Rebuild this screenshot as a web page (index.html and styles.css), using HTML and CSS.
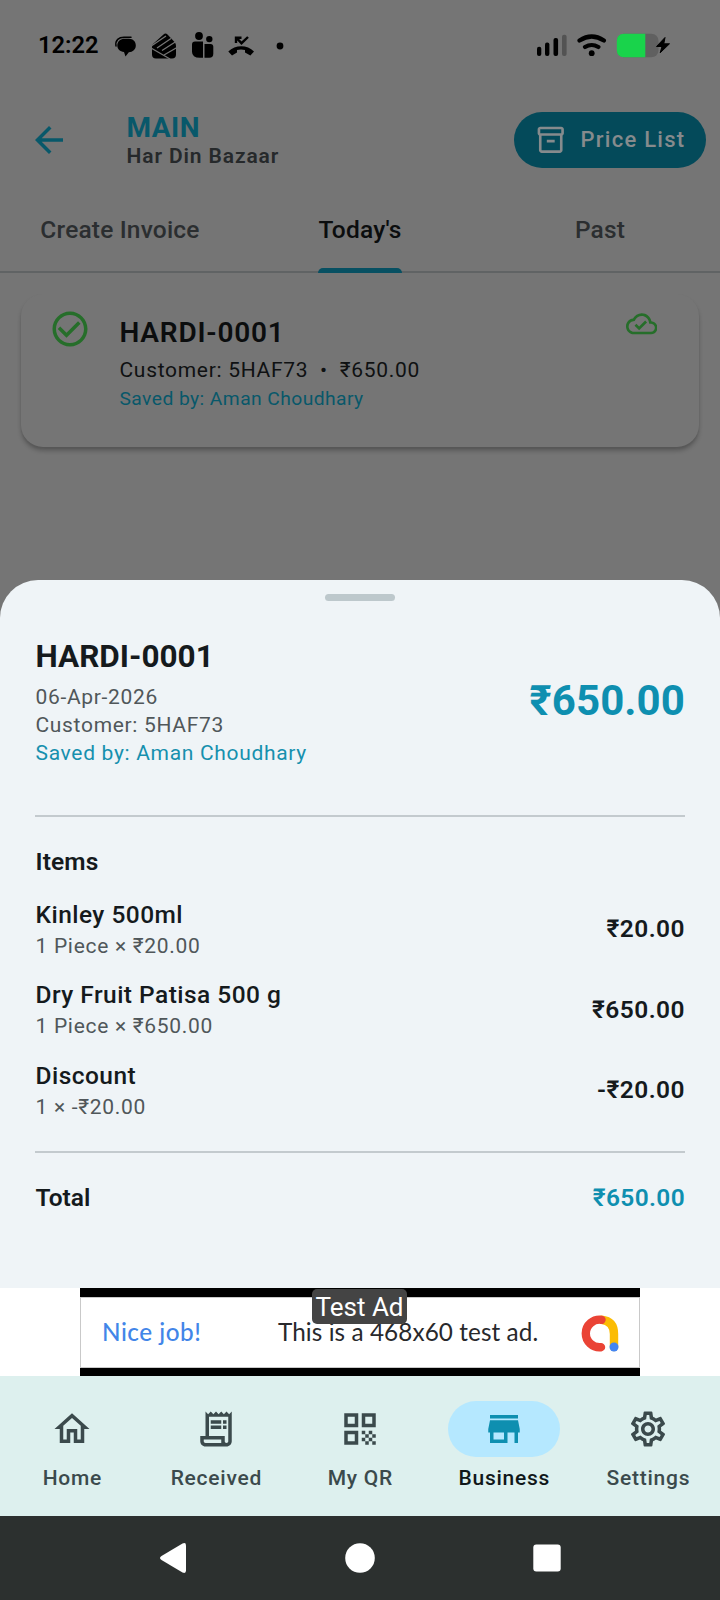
FILE: index.html
```html
<!DOCTYPE html>
<html lang="en">
<head>
<meta charset="utf-8">
<title>Invoice details</title>
<link rel="stylesheet" href="styles.css">
</head>
<body>
<div class="screen">
  <div class="backdrop">
    <div class="status">
      <span class="clock">12:22</span>
      <svg class="notif" width="250" height="30" viewBox="0 0 250 30">
        <path class="rim" d="M2 16C1 10 5 7.300 10 7.300h7"/>
        <path d="M11 8.800h4c4 0 6.800 2.800 6.800 6.600 0 4-3 6.400-7 6.800L11.500 26.500l-1.500-4.500C6 21.500 3.300 19 3.300 15.500c0-4 3.200-6.700 7.700-6.700z"/>
        <g transform="translate(38,1)"><path d="M1 13 11.500 3.500q2-2 4 0l7.500 8q1 1.500 1 3.500v8.500q0 4-4 4H4q-4 0-4-4V16q0-2 1-3z"/><g class="cut"><path d="M0 14.500 14 5M5 17 19 7.500M10 19.500 24 10.500M-1 17l19 11M25 16.500 12 24"/></g></g>
        <g transform="translate(77,1.500)"><circle cx="8" cy="4.500" r="3.900"/><circle cx="18.300" cy="7.600" r="3.200"/><path d="M4 10h8v16.300H9q-8 0-8-6v-7.300q0-3 3-3z"/><path d="M13.500 12.500h6q2.800 0 2.800 3v6.800q0 4-4 4h-4.800z"/></g>
        <path d="M114.300 21.500c7-7 19-7 25.700 0l-3.600 4-5.400-3v-2.500q-4-1.200-8 0V22.500l-5 3z"/>
        <path class="line" d="M122 13V7.800h5.500M122.500 8l5 5.200L134 7"/>
        <circle cx="166" cy="16" r="3.400"/>
      </svg>
      <svg class="system" width="136" height="30" viewBox="0 0 136 30">
        <rect x="2" y="16.800" width="4.300" height="9.200" rx="2"/><rect x="10" y="12.500" width="4.400" height="13.500" rx="2"/><rect x="18.500" y="8" width="4.600" height="18" rx="2"/><rect x="27" y="4.800" width="4.600" height="21.200" rx="2" fill="#535353"/>
        <path class="wave" d="M44.500 10.500q12.200-8 24.400 0M50 17q6.700-4 13.400 0"/><circle cx="56.700" cy="23.200" r="2.900"/>
        <rect x="82" y="3.700" width="41.500" height="23.500" rx="7" fill="#606060"/><path d="M89 3.700h21.300v23.500H89q-7.200 0-7.200-7.500v-8.500q0-7.500 7.200-7.500z" fill="#19d34b"/>
        <path class="bolt" d="m130 7.500-8.500 9h5.500l-1.800 6.300 9.300-9h-5.700z"/>
      </svg>
    </div>
    <header class="appbar">
      <svg class="back" width="42" height="42" viewBox="0 0 24 24"><path d="M20 11H7.830l5.590-5.590L12 4l-8 8 8 8 1.410-1.410L7.830 13H20v-2z"/></svg>
      <div class="heading">
        <div class="brand">MAIN</div>
        <div class="shop">Har Din Bazaar</div>
      </div>
      <div class="price-button">
        <svg width="31.500" height="31.500" viewBox="0 0 24 24"><path d="M20 2H4c-1 0-2 .9-2 2v3.010c0 .72.430 1.340 1 1.690V20c0 1.100 1.100 2 2 2h14c.9 0 2-.9 2-2V8.700c.570-.350 1-.970 1-1.690V4c0-1.100-1-2-2-2zm-1 18H5V9h14v11zm1-13H4V4h16v3zM9 12h6v2H9z"/></svg>
        <span>Price List</span>
      </div>
    </header>
    <div class="tabs">
      <div class="tab"><span>Create Invoice</span></div>
      <div class="tab active"><span>Today's</span></div>
      <div class="tab"><span>Past</span></div>
    </div>
    <div class="list">
      <div class="card">
        <svg class="check" width="42" height="42" viewBox="0 0 24 24"><path d="M16.590 7.580L10 14.170l-3.590-3.580L5 12l5 5 8-8zM12 2C6.480 2 2 6.480 2 12s4.480 10 10 10 10-4.480 10-10S17.520 2 12 2zm0 18c-4.420 0-8-3.580-8-8s3.580-8 8-8 8 3.580 8 8-3.580 8-8 8z"/></svg>
        <div class="card-text">
          <div class="card-title">HARDI-0001</div>
          <div class="card-sub">Customer: 5HAF73 &nbsp;•&nbsp; ₹650.00</div>
          <div class="card-saved">Saved by: Aman Choudhary</div>
        </div>
        <svg class="cloud" width="31.500" height="31.500" viewBox="0 0 24 24"><path d="M19.350 10.040C18.670 6.590 15.640 4 12 4 9.110 4 6.600 5.640 5.350 8.040 2.340 8.360 0 10.910 0 14c0 3.310 2.690 6 6 6h13c2.760 0 5-2.240 5-5 0-2.640-2.050-4.780-4.650-4.960zM19 18H6c-2.210 0-4-1.790-4-4 0-2.050 1.530-3.760 3.560-3.970l1.070-.110.500-.950C8.080 7.140 9.940 6 12 6c2.620 0 4.880 1.860 5.390 4.430l.3 1.500 1.530.110c1.560.1 2.780 1.410 2.780 2.960 0 1.650-1.350 3-3 3zm-9-3.820l-2.090-2.090L6.500 13.500 10 17l6.010-6.010-1.410-1.410z"/></svg>
      </div>
    </div>
  </div>

  <section class="sheet-wrap"><div class="sheet">
    <div class="handle"></div>
    <div class="summary">
      <div>
        <div class="invoice-id">HARDI-0001</div>
        <div class="meta">06-Apr-2026</div>
        <div class="meta customer">Customer: 5HAF73</div>
        <div class="meta saved">Saved by: Aman Choudhary</div>
      </div>
      <div class="amount">₹650.00</div>
    </div>
    <div class="items">
      <div class="items-title">Items</div>
      <div class="item"><div><div class="name">Kinley 500ml</div><div class="qty">1 Piece × ₹20.00</div></div><div class="cost">₹20.00</div></div>
      <div class="item"><div><div class="name">Dry Fruit Patisa 500 g</div><div class="qty">1 Piece × ₹650.00</div></div><div class="cost">₹650.00</div></div>
      <div class="item"><div><div class="name">Discount</div><div class="qty">1 × -₹20.00</div></div><div class="cost">-₹20.00</div></div>
    </div>
    <div class="total"><span>Total</span><span class="total-value">₹650.00</span></div>
  </div></section>

  <div class="ad">
    <div class="banner">
      <div class="banner-body">
        <span class="cheer">Nice job!</span>
        <span class="ad-copy">This is a 468x60 test ad.</span>
        <svg class="ad-logo" width="38" height="38" viewBox="0 0 38 38"><path d="M20.500 5.700Q33 7 33 20v13" stroke="#fbbc04"/><path d="M20.500 5.800A13.800 13.800 0 1 0 20 33.200" stroke="#ea4335"/><circle cx="33" cy="33" r="4.500" fill="#4285f4"/></svg>
      </div>
      <span class="ad-tag">Test Ad</span>
    </div>
  </div>

  <nav class="nav">
    <div class="nav-item"><span class="pill"><svg width="42" height="42" viewBox="0 0 24 24"><path d="M12 5.690l5 4.500V18h-2v-6H9v6H7v-7.810l5-4.500M12 3L2 12h3v8h6v-6h2v6h6v-8h3L12 3z"/></svg></span><span class="label">Home</span></div>
    <div class="nav-item"><span class="pill"><svg width="42" height="42" viewBox="0 0 24 24"><path d="M19.500 3.500L18 2l-1.500 1.500L15 2l-1.500 1.500L12 2l-1.500 1.500L9 2 7.500 3.500 6 2v14H3v3c0 1.660 1.340 3 3 3h12c1.660 0 3-1.340 3-3V2l-1.500 1.500zM15 20H6c-.550 0-1-.450-1-1v-1h10v2zm4-1c0 .550-.450 1-1 1s-1-.450-1-1v-3H8V5h11v14zM9 7h6v2H9zM16 7h2v2h-2zM9 10h6v2H9zM16 10h2v2h-2z"/></svg></span><span class="label">Received</span></div>
    <div class="nav-item"><span class="pill"><svg width="42" height="42" viewBox="0 0 24 24"><path d="M3 11h8V3H3v8zm2-6h4v4H5V5zM3 21h8v-8H3v8zm2-6h4v4H5v-4zM13 3v8h8V3h-8zm6 6h-4V5h4v4zM19 19h2v2h-2zM13 13h2v2h-2zM15 15h2v2h-2zM13 17h2v2h-2zM15 19h2v2h-2zM17 17h2v2h-2zM17 13h2v2h-2zM19 15h2v2h-2z"/></svg></span><span class="label">My QR</span></div>
    <div class="nav-item selected"><span class="pill"><svg width="42" height="42" viewBox="0 0 24 24"><path d="M20 4H4v2h16V4zm1 10v-2l-1-5H4l-1 5v2h1v6h10v-6h4v6h2v-6h1zm-9 4H6v-4h6v4z"/></svg></span><span class="label">Business</span></div>
    <div class="nav-item"><span class="pill"><svg width="42" height="42" viewBox="0 0 24 24"><path d="M19.430 12.980c.04-.32.07-.64.07-.98 0-.34-.03-.66-.07-.98l2.110-1.650c.19-.15.24-.42.12-.64l-2-3.460c-.09-.16-.26-.25-.44-.25-.06 0-.12.01-.17.03l-2.490 1c-.52-.4-1.080-.73-1.690-.98l-.38-2.650C14.460 2.180 14.250 2 14 2h-4c-.25 0-.46.18-.49.42l-.38 2.650c-.61.25-1.170.59-1.690.98l-2.490-1c-.06-.02-.12-.03-.18-.03-.17 0-.34.09-.43.25l-2 3.460c-.13.22-.07.49.12.64l2.110 1.650c-.04.32-.07.65-.07.98 0 .33.03.66.07.98l-2.110 1.650c-.19.15-.24.42-.12.64l2 3.460c.09.16.26.25.44.25.06 0 .12-.01.17-.03l2.490-1c.52.4 1.080.73 1.690.98l.38 2.650c.03.24.24.42.49.42h4c.25 0 .46-.18.49-.42l.38-2.650c.61-.25 1.170-.59 1.690-.98l2.490 1c.06.02.12.03.18.03.17 0 .34-.09.43-.25l2-3.460c.12-.22.07-.49-.12-.64l-2.110-1.650zm-1.980-1.710c.04.31.05.52.05.73 0 .21-.02.43-.05.73l-.14 1.130.89.7 1.080.84-.7 1.210-1.270-.51-1.040-.42-.9.68c-.43.32-.84.56-1.250.73l-1.060.43-.16 1.130-.2 1.350h-1.400l-.19-1.350-.16-1.130-1.060-.43c-.43-.18-.83-.41-1.230-.71l-.91-.7-1.060.43-1.270.51-.7-1.210 1.080-.84.89-.7-.14-1.130c-.03-.31-.05-.54-.05-.74s.02-.43.05-.73l.14-1.130-.89-.7-1.080-.84.7-1.210 1.270.51 1.040.42.9-.68c.43-.32.84-.56 1.250-.73l1.060-.43.16-1.130.2-1.350h1.390l.19 1.350.16 1.130 1.060.43c.43.18.83.41 1.230.71l.91.7 1.060-.43 1.270-.51.7 1.210-1.070.85-.89.7.14 1.130zM12 8c-2.210 0-4 1.790-4 4s1.790 4 4 4 4-1.790 4-4-1.790-4-4-4zm0 6c-1.100 0-2-.9-2-2s.9-2 2-2 2 .9 2 2-.9 2-2 2z"/></svg></span><span class="label">Settings</span></div>
  </nav>

  <div class="sysbar">
    <svg width="28" height="32" viewBox="0 0 28 32"><path d="M2.500 14 23.500 1.500q3.500-1.500 3.500 2v25q0 3.500-3.500 2L2.500 18q-3-2 0-4z"/></svg>
    <svg width="30" height="30" viewBox="0 0 30 30"><circle cx="15" cy="15" r="14.800"/></svg>
    <svg width="28" height="28" viewBox="0 0 28 28"><rect x=".3" y=".5" width="27.400" height="27" rx="3"/></svg>
  </div>
</div>
</body>
</html>
```
FILE: styles.css
```css
* { box-sizing: border-box; }
body { margin: 0; font-family: Roboto, "Noto Sans", sans-serif; }
svg { display: block; flex: none; }
.screen { width: 720px; height: 1600px; display: flex; flex-direction: column; overflow: hidden; white-space: nowrap; }

.backdrop { height: 580px; background: #757575; flex: none; }
.status { height: 90px; display: flex; align-items: center; padding: 0 49px 0 38px; }
.clock { font-size: 23.7px; line-height: 28px; font-weight: 600; color: #000; width: 76px; }
.notif .cut { fill: none; stroke: #757575; stroke-width: 1.3; }
.notif .line { fill: none; stroke: #000; stroke-width: 2.4; }
.notif .rim { fill: none; stroke: #000; stroke-width: 1.5; stroke-linecap: round; }
.system { margin-left: auto; }
.system .wave { fill: none; stroke: #000; stroke-width: 4.2; stroke-linecap: round; }
.system .bolt { stroke: #000; stroke-width: 1; stroke-linejoin: round; }

.appbar { height: 99px; display: flex; align-items: flex-start; padding: 22px 14px 0 28px; }
.back { margin-top: 7px; fill: #08586a; }
.heading { margin-left: 56.5px; }
.brand { font-size: 28px; line-height: 32px; font-weight: 700; letter-spacing: .5px; color: #08586a; }
.shop { font-size: 21px; line-height: 24px; font-weight: 600; letter-spacing: .88px; color: #26292b; }
.price-button { margin-left: auto; width: 192px; height: 56px; border-radius: 28px; background: #044a5a; display: flex; align-items: center; gap: 14px; padding-left: 21px; color: #868b8d; font-size: 22px; font-weight: 500; letter-spacing: 1.25px; }
.price-button svg { fill: #868b8d; }
.price-button span { padding-bottom: 1px; }

.tabs { height: 84px; display: grid; grid-template-columns: repeat(3, 1fr); border-bottom: 2px solid #606364; }
.tab { display: flex; justify-content: center; color: #2b2e30; font-size: 24.5px; line-height: 82px; font-weight: 500; letter-spacing: .18px; }
.tab span { position: relative; height: 84px; }
.tab.active { color: #0b0d0e; }
.tab.active span::after { content: ""; position: absolute; left: 0; right: 0; bottom: 0; height: 5px; border-radius: 5px 5px 0 0; background: #075062; }
.list { padding: 21px 21px 0; }
.card { height: 153px; border-radius: 22px; background: #757575; box-shadow: 0 4px 4px rgba(0,0,0,.22), 0 2px 2px rgba(0,0,0,.06); display: flex; align-items: flex-start; padding: 14px 42px 0 28px; }
.check, .cloud { fill: #266e2a; }
.cloud { margin-left: auto; }
.card-text { margin-left: 28.5px; }
.card-title { font-size: 28px; line-height: 42px; font-weight: 600; letter-spacing: .8px; color: #0b0d0e; margin-top: 4px; }
.card-sub { font-size: 21px; line-height: 32px; letter-spacing: .7px; color: #0f1112; }
.card-saved { margin-top: 2px; font-size: 19.25px; line-height: 22px; letter-spacing: .43px; color: #08586a; }

.sheet-wrap { height: 708px; background: #757575; flex: none; }
.sheet { height: 708px; padding: 14px 35px 0; background: #eff4f7; border-radius: 38px 38px 0 0; }
.handle { width: 70px; height: 7px; margin: 0 auto; border-radius: 4px; background: #bdc8cc; }
.summary { height: 216px; padding: 35px 0 0 .5px; display: flex; justify-content: space-between; border-bottom: 2px solid #c3cace; }
.invoice-id { font-size: 31.5px; line-height: 42px; font-weight: 700; color: #151a1d; margin-bottom: 5px; }
.meta { font-size: 21px; line-height: 28px; letter-spacing: .68px; color: #50575a; }
.meta.saved { color: #1690ae; }
.amount { font-size: 42px; line-height: 50px; font-weight: 700; letter-spacing: .1px; color: #0e8fb0; margin-top: 39.5px; }
.items { height: 336px; border-bottom: 2px solid #c3cace; padding: 27px 0 0 .5px; color: #151a1d; }
.items-title { font-size: 24.5px; line-height: 35px; font-weight: 600; letter-spacing: .1px; }
.item { height: 80.6px; display: flex; justify-content: space-between; align-items: center; }
.items-title + .item { margin-top: 9.5px; }
.name { font-size: 24.5px; line-height: 33px; font-weight: 500; letter-spacing: .46px; }
.qty { margin-top: 1px; font-size: 21px; line-height: 28px; letter-spacing: .7px; color: #50575a; }
.cost { font-size: 24.5px; font-weight: 600; letter-spacing: .45px; }
.total { display: flex; justify-content: space-between; padding: 27px 0 0 .5px; font-size: 24.5px; line-height: 35px; font-weight: 600; color: #151a1d; }
.total-value { color: #0e8fb0; letter-spacing: .35px; }

.ad { height: 88px; background: #fff; display: flex; justify-content: center; flex: none; }
.banner { position: relative; width: 560px; height: 88px; background: #000; padding: 9px 0 8px; }
.banner-body { height: 71px; background: #fff; border: 1px solid #c9c9c9; display: flex; align-items: center; font-family: Lato, sans-serif; font-size: 24.3px; line-height: 67px; }
.banner-body span { padding-bottom: 2px; }
.cheer { margin-left: 21px; width: 176px; color: #4285e8; font-weight: 500; letter-spacing: .5px; }
.ad-copy { color: #28292c; letter-spacing: .08px; }
.ad-logo { margin-left: auto; margin-right: 20.5px; fill: none; stroke-width: 8.4; stroke-linecap: round; }
.ad-logo circle { stroke: none; }
.ad-tag { position: absolute; left: 232px; top: 1px; width: 95px; height: 35px; border-radius: 5px; background: #444; color: #fff; font-size: 26px; line-height: 37px; text-align: center; }

.nav { height: 140px; background: #ddf0ee; display: grid; grid-template-columns: repeat(5, 1fr); padding-top: 24.5px; flex: none; }
.nav-item { display: flex; flex-direction: column; align-items: center; color: #3b4a4c; }
.pill { width: 112px; height: 56px; border-radius: 28px; display: grid; place-items: center; }
.pill svg { fill: currentColor; }
.label { margin-top: 7.5px; padding-left: .7px; font-size: 21px; line-height: 28px; font-weight: 500; letter-spacing: .75px; }
.selected { color: #101719; }
.selected .pill { background: #b5e8ff; color: #0e8fb0; }

.sysbar { height: 84px; background: #2c302f; display: grid; grid-template-columns: 216px 1fr 216px; align-items: center; justify-items: center; padding: 0 65px; flex: none; }
.sysbar svg { fill: #fff; }
```
